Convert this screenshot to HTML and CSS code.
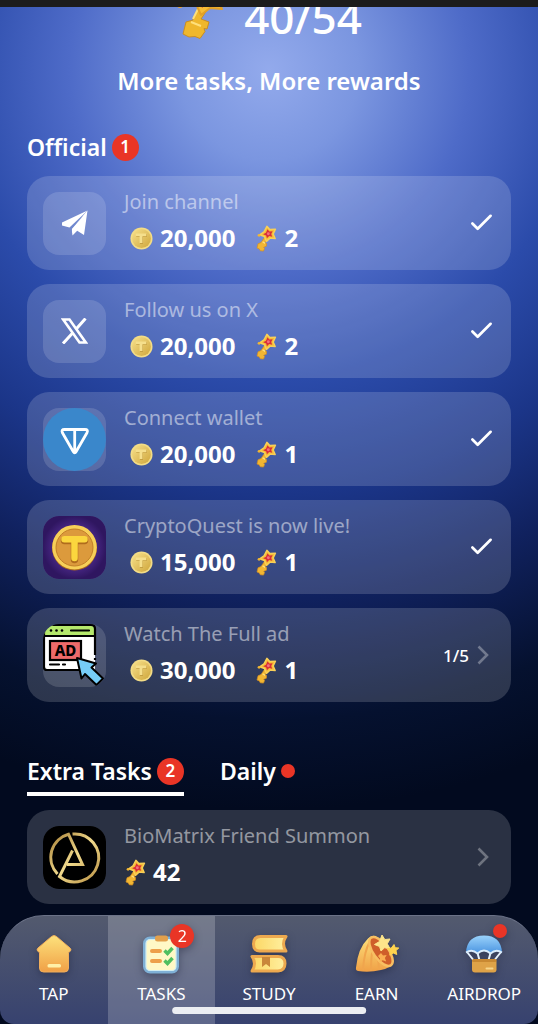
FILE: index.html
```html
<!DOCTYPE html>
<html lang="en">
<head>
    <meta charset="UTF-8">
    <meta name="viewport" content="width=device-width, initial-scale=1.0">
    <title>Tasks</title>
    <link rel="stylesheet" href="styles.css">
</head>
<body>
    <!-- Shared icons -->
    <svg class="sprite" aria-hidden="true">
        <defs>
            <linearGradient id="gold" x1="0" y1="0" x2="0" y2="1">
                <stop offset="0" stop-color="#fde27c"/>
                <stop offset="1" stop-color="#f0a046"/>
            </linearGradient>
            <linearGradient id="coinFace" x1="0" y1="0" x2="1" y2="1">
                <stop offset="0" stop-color="#f7e08a"/>
                <stop offset="1" stop-color="#cfa63c"/>
            </linearGradient>
            <linearGradient id="book" x1="0" y1="0" x2="1" y2="0">
                <stop offset="0" stop-color="#fbd765"/>
                <stop offset="1" stop-color="#fff0a0"/>
            </linearGradient>
            <linearGradient id="sky" x1="0" y1="0" x2="0" y2="1">
                <stop offset="0" stop-color="#9ad2fb"/>
                <stop offset="1" stop-color="#4a94e0"/>
            </linearGradient>
            <linearGradient id="brass" x1="0" y1="0" x2="1" y2="1">
                <stop offset="0" stop-color="#a98238"/>
                <stop offset="0.5" stop-color="#f0d98c"/>
                <stop offset="1" stop-color="#b88f42"/>
            </linearGradient>
            <radialGradient id="purple">
                <stop offset="0.4" stop-color="#5a34a0"/>
                <stop offset="1" stop-color="#2f1660"/>
            </radialGradient>
        </defs>
        <symbol id="coin" viewBox="0 0 24 24">
            <circle cx="12" cy="12" r="11.5" fill="#f3dc86"/>
            <circle cx="12" cy="12" r="9.8" fill="url(#coinFace)"/>
            <path d="M6.5 7.5h11v3h-4v7.2h-3v-7.2h-4z" fill="#c49f42"/>
            <path d="M6 6.8h11v2.8h-4v7.2h-3V9.600h-4z" fill="#f5df8c"/>
        </symbol>
        <symbol id="key" viewBox="0 0 24 30">
            <path d="M10.500 13.500 6.500 19.500 3.200 20.800 2 25.500 4.600 26.600 5.600 28.600 9.200 29 10.400 26.200 9.400 24.800 12.400 23.600 12.600 20.600 11 19.800 14.500 14.500z" fill="#f2b632" stroke="#d58f22" stroke-width=".8" stroke-linejoin="round"/>
            <path d="M8.200 18.500 11 20.400" stroke="#ffe17a" stroke-width="1.400"/>
            <path d="M13 1.500 16.200 5 22.500 4.600 20 10 22.200 15 16.400 14.600 12.500 18.200 10.400 13 5 10.800 9.800 7.500z" fill="#f6bd35" stroke="#f9cf58" stroke-width="1.600" stroke-linejoin="round"/>
            <path d="M13.600 4.800 15.800 7.200 19.400 7 17.800 10.100 18.900 13 15.600 12.300 13 14.600 12.200 11.700 8.800 10.400 12 8.700z" fill="#d92f38"/>
            <circle cx="14.600" cy="9.700" r="1.600" fill="#f3707a"/>
            <circle cx="4.300" cy="11.500" r="1.600" fill="#f2b632"/>
        </symbol>
        <!-- Larger key of the header, with a broad bit -->
        <symbol id="bigKey" viewBox="0 0 48 64">
            <path d="m24 28-8 17-7 2-3 12 6 3 6-.500 5 2 5-7-1-3 3 .500 2-7-8-3 8-12z" transform="translate(1 -1)" fill="#efb72c" stroke="#c98d24" stroke-width="1" stroke-linejoin="round"/>
            <path d="m15 46 10 4M22 33l-5 10" fill="none" stroke="#ffe07a" stroke-width="2"/>
            <path d="m26 3 7 8 13-1-5 12 5 11-12-1-9 7-5-11-14-4 12-8z" fill="#f6bd35" stroke="#e2a128" stroke-width="2" stroke-linejoin="round"/>
            <path d="m27 10 5 6 8-1-4 7 3 7-8-2-5 5-2-7-8-3 8-4z" fill="#d9452f"/>
            <circle cx="4" cy="29" r="3" fill="#efa52c"/>
        </symbol>
        <symbol id="check" viewBox="0 0 24 20">
            <path d="M2.500 10.500 8 16 21.500 2.500" fill="none" stroke="#fff" stroke-width="2.800" stroke-linecap="round" stroke-linejoin="round"/>
        </symbol>
        <symbol id="chevron" viewBox="0 0 12 20">
            <path d="M1.500 1.500 10 10 1.500 18.500" fill="none" stroke="#fff" stroke-opacity=".32" stroke-width="2.600"/>
        </symbol>
    </svg>

    <div class="app">
        <div class="topbar"></div>

        <main>
            <header class="hero">
                <div class="count">
                    <svg class="count-key"><use href="#bigKey"/></svg>
                    <span>40/54</span>
                </div>
                <h1>More tasks, More rewards</h1>
            </header>

            <section>
                <h2>Official <span class="badge">1</span></h2>
                <ul class="tasks">
                    <li>
                        <a class="task" href="#">
                            <span class="tile">
                                <svg width="26" height="26" viewBox="0 0 26 26">
                                    <path d="M25.500.500 0 12.500 0 15.500 7.500 17.400z" fill="#fff"/>
                                    <path d="M25.500.500 22 25 15.200 20.800 10.500 25.500 9.500 18.500z" fill="#fff"/>
                                    <path d="M21.500 5.500 8.600 17.600 10 25.500 9.800 19z" fill="#6f88cf"/>
                                </svg>
                            </span>
                            <span class="info">
                                <span class="name">Join channel</span>
                                <span class="rewards">
                                    <span class="coins"><svg class="coin"><use href="#coin"/></svg>20,000</span>
                                    <span class="keys"><svg class="key"><use href="#key"/></svg>2</span>
                                </span>
                            </span>
                            <svg class="check"><use href="#check"/></svg>
                        </a>
                    </li>
                    <li>
                        <a class="task" href="#">
                            <span class="tile">
                                <svg class="x-logo" width="27" height="26" viewBox="0 0 27 26">
                                    <path d="M2.200 1.500H8.500L24.800 24.500H18.500z" fill="none" stroke="#fff" stroke-width="2.600"/>
                                    <path d="M24.500.500 15.200 11M11.400 15.200 2 25.500" stroke="#fff" stroke-width="3"/>
                                </svg>
                            </span>
                            <span class="info">
                                <span class="name">Follow us on X</span>
                                <span class="rewards">
                                    <span class="coins"><svg class="coin"><use href="#coin"/></svg>20,000</span>
                                    <span class="keys"><svg class="key"><use href="#key"/></svg>2</span>
                                </span>
                            </span>
                            <svg class="check"><use href="#check"/></svg>
                        </a>
                    </li>
                    <li>
                        <a class="task" href="#">
                            <span class="tile">
                                <svg width="63" height="63" viewBox="0 0 63 63">
                                    <circle cx="31.500" cy="31.500" r="31.500" fill="#3a87cb"/>
                                    <path d="M21.500 21.500h20.500q3.500 0 2 3.200L33.200 43.500q-1.500 2.500-3 0L19.400 24.700Q18 21.500 21.500 21.500zM31.700 22v22" fill="none" stroke="#fff" stroke-width="2.800" stroke-linejoin="round"/>
                                </svg>
                            </span>
                            <span class="info">
                                <span class="name">Connect wallet</span>
                                <span class="rewards">
                                    <span class="coins"><svg class="coin"><use href="#coin"/></svg>20,000</span>
                                    <span class="keys"><svg class="key"><use href="#key"/></svg>1</span>
                                </span>
                            </span>
                            <svg class="check"><use href="#check"/></svg>
                        </a>
                    </li>
                    <li>
                        <a class="task" href="#">
                            <span class="tile">
                                <svg width="63" height="63" viewBox="0 0 63 63">
                                    <rect width="63" height="63" fill="url(#purple)"/>
                                    <circle cx="31.500" cy="32" r="22.500" fill="#a9661d"/>
                                    <circle cx="31.500" cy="31.200" r="22.300" fill="#f7cf58"/>
                                    <circle cx="31.500" cy="31.500" r="18.500" fill="#dc9a3c" stroke="#c07d28" stroke-width="1"/>
                                    <path d="M21.500 24.500h20M31.500 25v18.500" stroke="#b06c1d" stroke-width="7.500" stroke-linecap="round"/>
                                    <path d="M21.500 23.200h20M31.500 24v18" stroke="#fbd63e" stroke-width="6.500" stroke-linecap="round"/>
                                </svg>
                            </span>
                            <span class="info">
                                <span class="name">CryptoQuest is now live!</span>
                                <span class="rewards">
                                    <span class="coins"><svg class="coin"><use href="#coin"/></svg>15,000</span>
                                    <span class="keys"><svg class="key"><use href="#key"/></svg>1</span>
                                </span>
                            </span>
                            <svg class="check"><use href="#check"/></svg>
                        </a>
                    </li>
                    <li>
                        <a class="task" href="#">
                            <span class="tile">
                                <svg width="63" height="63" viewBox="0 0 63 63">
                                    <path d="M1 13V6q0-5 5-5h42q4 0 4 4v8z" fill="#b5e86c"/>
                                    <path d="M1 12h51v34H4q-3 0-3-3z" fill="#fff"/>
                                    <path d="M52 31V5q0-4-4-4H6Q1 1 1 6v37q0 3 3 3h33M1 12h51M52 34v2" fill="none" stroke="#000" stroke-width="2.200"/>
                                    <path d="M28 6.500h18M7 40.500h9M20 40.500h2" stroke="#000" stroke-width="2.200" stroke-linecap="round"/>
                                    <circle cx="8" cy="6.500" r="1.300"/>
                                    <circle cx="13.500" cy="6.500" r="1.300"/>
                                    <circle cx="19" cy="6.500" r="1.300"/>
                                    <rect x="7" y="17" width="31" height="19" fill="#ee6a6a" stroke="#000" stroke-width="2.200"/>
                                    <text class="ad-text" x="22.500" y="32" text-anchor="middle">AD</text>
                                    <path d="M34 34 53 39.500 48.500 43.500 60 54.500 53.500 61 42 50 38.500 54.500z" fill="#76cdf8" stroke="#000" stroke-width="2" stroke-linejoin="round"/>
                                </svg>
                            </span>
                            <span class="info">
                                <span class="name">Watch The Full ad</span>
                                <span class="rewards">
                                    <span class="coins"><svg class="coin"><use href="#coin"/></svg>30,000</span>
                                    <span class="keys"><svg class="key"><use href="#key"/></svg>1</span>
                                </span>
                            </span>
                            <span class="progress">1/5</span>
                            <svg class="chevron"><use href="#chevron"/></svg>
                        </a>
                    </li>
                </ul>
            </section>

            <section class="extra">
                <div class="tabs">
                    <button class="tab active" type="button">Extra Tasks <span class="badge">2</span></button>
                    <button class="tab" type="button">Daily <span class="dot"></span></button>
                </div>
                <ul class="tasks">
                    <li>
                        <a class="task" href="#">
                            <span class="tile">
                                <svg width="63" height="63" viewBox="0 0 63 63">
                                    <rect width="63" height="63" fill="#000"/>
                                    <path d="M14.500 48A24 24 0 0 1 25.500 8.200L39.500 38.500H24M29.500 8A24 24 0 1 1 16.500 50.500L29.500 24.500" fill="none" stroke="url(#brass)" stroke-width="3"/>
                                </svg>
                            </span>
                            <span class="info">
                                <span class="name">BioMatrix Friend Summon</span>
                                <span class="rewards">
                                    <span class="keys"><svg class="key"><use href="#key"/></svg>42</span>
                                </span>
                            </span>
                            <svg class="chevron"><use href="#chevron"/></svg>
                        </a>
                    </li>
                </ul>
            </section>
        </main>

        <nav class="nav">
            <a class="nav-item" href="#">
                <span class="nav-icon">
                    <svg width="40" height="40" viewBox="0 0 40 40">
                        <path d="M17.500 2.500Q20 .500 22.500 2.500L36 14q2 2 0 3.500l-1.500 1V34q0 4-4 4h-21q-4 0-4-4V18.500L4 17.500Q2 16 4 14z" fill="url(#gold)" stroke="#f0ae5c" stroke-width="1"/>
                        <rect x="13.500" y="30" width="13.500" height="3.500" rx="1.500" fill="#fff0a8"/>
                    </svg>
                </span>
                TAP
            </a>
            <a class="nav-item active" href="#">
                <span class="nav-icon">
                    <svg width="40" height="40" viewBox="0 0 40 40">
                        <rect x="3.500" y="4" width="33" height="34" rx="5.500" fill="#fff8c6" stroke="#7fb0d6" stroke-width="3"/>
                        <rect x="5" y="5.500" width="30" height="31" rx="4" fill="none" stroke="#d3eef2" stroke-width="1.200"/>
                        <rect x="14" y="1.500" width="13" height="6" rx="2.500" fill="#e3a04c"/>
                        <path d="M11 17h8M11 27h8" stroke="#eda04a" stroke-width="4" stroke-linecap="round"/>
                        <path d="M23.500 16.500 26.500 19.500 31.500 14M23.500 26.500 26.500 29.500 31.500 24" fill="none" stroke="#4fbf60" stroke-width="3.400"/>
                    </svg>
                    <span class="badge nav-badge">2</span>
                </span>
                TASKS
            </a>
            <a class="nav-item" href="#">
                <span class="nav-icon">
                    <svg width="40" height="40" viewBox="0 0 40 40">
                        <path d="M37 2.500H11.500Q4.500 2.500 4.500 10t7 7H37q-5-7 0-14.500z" fill="url(#book)" stroke="#eda94f" stroke-width="3" stroke-linejoin="round"/>
                        <path d="M3 22.500h26q7 0 7 7t-7 7.500H3q5-7.500 0-14.500z" fill="url(#book)" stroke="#eda94f" stroke-width="3" stroke-linejoin="round"/>
                        <path d="M13 23h8v10l-4-3-4 3z" fill="#c9873a"/>
                    </svg>
                </span>
                STUDY
            </a>
            <a class="nav-item" href="#">
                <span class="nav-icon">
                    <svg width="44" height="40" viewBox="0 0 44 40">
                        <path d="M1 33.500Q3 14 13 4.500q3-3.500 8-2.500L37 30q-2 4-11 6-12 3-23 1Q.500 36.500 1 33.500z" fill="url(#gold)"/>
                        <path d="M8 36Q9 18 15 7M16 37Q16 22 18 12M24 36q0-8-2-14" fill="none" stroke="#f0a54d" stroke-width="2"/>
                        <ellipse cx="26" cy="17.500" rx="7.500" ry="17" transform="rotate(-36 26 17.500)" fill="#cf5f2a" stroke="#f8bf62" stroke-width="2.500"/>
                        <path d="m27 1 2.800 4.500 5.200-.500-2.700 4.800 2.700 4.700-5.500-.700-3.500 3.200-1.500-4.500-5-2 5-3z" fill="#fde58a" stroke="#fde58a" stroke-linejoin="round"/>
                        <path d="m26 19 2 2.500 3.700-.500-1.800 3 1.300 3.500-3.500-1.200-3 1.700.300-3.500-2-2.500z" fill="#fbb052"/>
                        <path d="m39 10.500 1.200 3.200 3.600.300-2.800 2.600.800 3.900-3.600-1.500-3.400 2.200.500-4-3-2.400 4-.800z" fill="#ffd34e" stroke="#ffd34e" stroke-linejoin="round"/>
                    </svg>
                </span>
                EARN
            </a>
            <a class="nav-item" href="#">
                <span class="nav-icon">
                    <svg width="40" height="40" viewBox="0 0 40 40">
                        <path d="M3 18 11 28M13.500 19 16 28M26.500 19 24 28M37 18 29 28" stroke="#e7f2fc" stroke-width="2"/>
                        <path d="M2 18.500Q3 1.500 20 1.500T38 18.500q-6-4-11.500 1-6.500-6-13 0-5.500-5-11.500-1z" fill="url(#sky)"/>
                        <path d="M2 18.500q6-4 11.500 1 6.500-6 13 0 5.500-5 11.500-1" fill="none" stroke="#d9ecfc" stroke-width="1.800"/>
                        <rect x="8" y="25" width="24.500" height="13.500" rx="3" fill="#dfa348"/>
                        <rect x="8" y="25" width="24.500" height="3" rx="1.500" fill="#c98932"/>
                        <rect x="21.500" y="33.500" width="8" height="2" rx="1" fill="#f8d68a"/>
                    </svg>
                    <span class="dot nav-dot"></span>
                </span>
                AIRDROP
            </a>
            <span class="home-bar"></span>
        </nav>
    </div>
</body>
</html>
```
FILE: styles.css
```css
* {
    box-sizing: border-box;
}
body {
    margin: 0;
    font-family: "Noto Sans", sans-serif;
    color: #fff;
    background-color: #020a1f;
}
h1, h2, ul {
    margin: 0;
    padding: 0;
}
ul {
    list-style: none;
}
a {
    color: inherit;
    text-decoration: none;
}
svg {
    display: block;
    flex-shrink: 0;
}
.sprite {
    position: absolute;
    width: 0;
    height: 0;
}
.app {
    display: flex;
    flex-direction: column;
    min-height: 100vh;
    background: radial-gradient(circle 760px at 50% 70px,
        #93aaec 0, #7b96e0 90px, #4e6bc8 200px, #2b4baa 310px,
        #1b3588 425px, #10215e 530px, #05112f 650px, #020a1f 740px);
}
.topbar {
    position: sticky;
    top: 0;
    z-index: 2;
    height: 7px;
    background-color: #1c1c1c;
}
main {
    padding: 0 27px 10px;
}

/* Header */
.hero {
    display: flex;
    flex-direction: column;
    align-items: center;
    gap: 24px;
    margin-top: -32px;
}
.count {
    display: flex;
    align-items: flex-end;
    gap: 20px;
    font-size: 44px;
    font-weight: 500;
    line-height: 48px;
}
.count-key {
    width: 48px;
    height: 66px;
}
h1 {
    font-size: 24px;
    font-weight: 600;
    line-height: 32px;
}
h2, .tab {
    display: flex;
    align-items: center;
    gap: 5px;
    font-size: 23px;
    font-weight: 600;
    line-height: 30px;
}
h2 {
    margin: 35px 0 14px;
}
.badge {
    display: flex;
    justify-content: center;
    align-items: center;
    width: 27px;
    height: 27px;
    border-radius: 50%;
    background-color: #e93526;
    font-size: 17px;
    font-weight: 600;
}
.dot {
    width: 14px;
    height: 14px;
    border-radius: 50%;
    background-color: #e93526;
}

/* Task list */
.tasks {
    display: flex;
    flex-direction: column;
    gap: 14px;
}
.task {
    display: flex;
    align-items: center;
    padding: 14px 18px 14px 16px;
    border-radius: 22px;
    background-color: rgba(255, 255, 255, 0.16);
}
.tile {
    display: flex;
    justify-content: center;
    align-items: center;
    width: 63px;
    height: 63px;
    border-radius: 16px;
    background-color: rgba(255, 255, 255, 0.14);
    overflow: hidden;
}
.info {
    flex: 1;
    margin-left: 18px;
}
.name {
    display: block;
    color: rgba(255, 255, 255, 0.5);
    font-size: 20px;
    line-height: 24px;
}
.rewards {
    display: flex;
    gap: 20px;
    margin-top: 6px;
    font-size: 24px;
    font-weight: 700;
    line-height: 36px;
}
.coins, .keys {
    display: flex;
    align-items: center;
    gap: 7px;
}
.coins {
    padding-left: 6px;
}
.coin {
    width: 23px;
    height: 23px;
}
.key {
    width: 22px;
    height: 27px;
}
.check {
    width: 23px;
    height: 20px;
}
.progress {
    margin-right: 8px;
    font-size: 17px;
    font-weight: 500;
}
.chevron {
    width: 12px;
    height: 20px;
    margin-right: 4px;
}
.ad-text {
    font-size: 15px;
    font-weight: 800;
}

/* Tabs */
.extra {
    margin-top: 54px;
}
.tabs {
    display: flex;
    gap: 36px;
    margin-bottom: 14px;
}
.tab {
    padding: 0 0 6px;
    border: none;
    border-bottom: 4px solid transparent;
    background: none;
    color: #fff;
    font-family: inherit;
    cursor: pointer;
}
.tab.active {
    border-bottom-color: #fff;
}

/* Bottom navigation */
.nav {
    position: sticky;
    bottom: 0;
    display: flex;
    margin-top: auto;
    border-top: 1px solid #6b7287;
    border-radius: 44px 44px 14px 14px;
    background: linear-gradient(#535a6e, #37426f);
    overflow: hidden;
}
.nav-item {
    flex: 1 1 0;
    display: flex;
    flex-direction: column;
    align-items: center;
    gap: 8px;
    min-width: 0;
    padding: 18px 0;
    font-size: 17px;
    line-height: 24px;
}
.nav-item.active {
    background-color: rgba(255, 255, 255, 0.2);
}
.nav-icon {
    position: relative;
    filter: drop-shadow(0 3px 4px rgba(20, 25, 50, 0.4));
}
.nav-badge {
    position: absolute;
    top: -10px;
    right: -13px;
    width: 24px;
    height: 24px;
    font-size: 16px;
    font-weight: 400;
}
.nav-dot {
    position: absolute;
    top: -10px;
    right: -3px;
}
.home-bar {
    position: absolute;
    bottom: 10px;
    left: 50%;
    width: 36%;
    height: 7px;
    border-radius: 4px;
    background-color: #eceef2;
    transform: translateX(-50%);
}
```
